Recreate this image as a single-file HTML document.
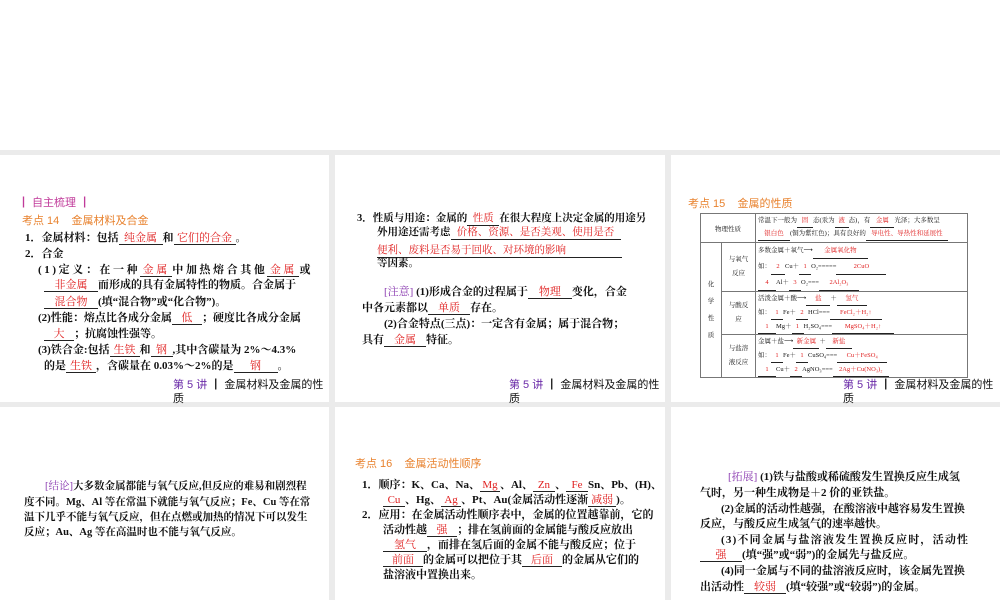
<!DOCTYPE html>
<html><head><meta charset="utf-8"><style>
body{margin:0;width:1000px;height:600px;background:#fff;position:relative;overflow:hidden;font-family:"Liberation Serif","Noto Serif CJK SC",serif;font-weight:bold;font-size:11px;color:#111}
.g{position:absolute;left:0;top:150px;width:1000px;height:450px;background:#ebebeb}
.p{position:absolute;background:#fff}
.l{position:absolute;white-space:nowrap;line-height:14px}
.b{display:inline-block;border-bottom:1px solid #222;color:#e02020;text-align:center;line-height:12px;font-weight:normal}
.h{color:#e8822e;font-family:"Liberation Sans","Noto Sans CJK SC",sans-serif;font-weight:normal;font-size:11px}
.m{color:#8a3ab0;font-weight:normal}
.f{font-family:"Liberation Sans","Noto Sans CJK SC",sans-serif;font-weight:normal;font-size:11px;color:#111}
.f i{font-style:normal;color:#6a2aa8}
table{position:absolute;border-collapse:collapse;table-layout:fixed;font-size:6.5px;font-weight:normal}
td{border:1px solid #777;padding:0 2px;vertical-align:middle;white-space:nowrap;overflow:hidden}
.r{color:#e02020;border-bottom:1px solid #222;display:inline-block;text-align:center}
</style></head><body>
<div class="g"></div>
<div class="p" style="left:0;top:155px;width:329px;height:247px"></div>
<div class="p" style="left:335px;top:155px;width:330px;height:247px"></div>
<div class="p" style="left:671px;top:155px;width:329px;height:247px"></div>
<div class="p" style="left:0;top:407px;width:329px;height:193px"></div>
<div class="p" style="left:335px;top:407px;width:330px;height:193px"></div>
<div class="p" style="left:671px;top:407px;width:329px;height:193px"></div>

<!-- panel 1 -->
<div class="l" style="left:18px;top:196px;color:#c03a9a;font-weight:normal;font-family:'Liberation Sans','Noto Sans CJK SC',sans-serif">┃ 自主梳理 ┃</div>
<div class="l h" style="left:22px;top:214px">考点 14 &nbsp;&nbsp; 金属材料及合金</div>
<div class="l" style="left:25px;top:231px">1．金属材料：包括<span class="b" style="width:44px">纯金属</span>和<span class="b" style="width:62px">它们的合金</span>。</div>
<div class="l" style="left:25px;top:247px">2．合金</div>
<div class="l" style="left:38px;top:263px;letter-spacing:2.6px">(1)定义：在一种<span class="b" style="width:32px">金属</span>中加热熔合其他<span class="b" style="width:32px">金属</span>或</div>
<div class="l" style="left:44px;top:278px"><span class="b" style="width:54px">非金属</span>而形成的具有金属特性的物质。合金属于</div>
<div class="l" style="left:44px;top:295px"><span class="b" style="width:54px">混合物</span>(填“混合物”或“化合物”)。</div>
<div class="l" style="left:38px;top:311px">(2)性能：熔点比各成分金属<span class="b" style="width:30px">低</span>；硬度比各成分金属</div>
<div class="l" style="left:44px;top:327px"><span class="b" style="width:30px">大</span>；抗腐蚀性强等。</div>
<div class="l" style="left:38px;top:343px">(3)铁合金:包括<span class="b" style="width:30px">生铁</span>和<span class="b" style="width:22px">钢</span>,其中含碳量为 2%～4.3%</div>
<div class="l" style="left:44px;top:359px">的是<span class="b" style="width:30px">生铁</span>，含碳量在 0.03%～2%的是<span class="b" style="width:44px">钢</span>。</div>
<div class="l f" style="left:173px;top:378px"><i>第 5 讲</i> ┃ 金属材料及金属的性</div>
<div class="l f" style="left:173px;top:392px">质</div>

<!-- panel 2 -->
<div class="l" style="left:357px;top:212px;font-size:10.5px">3．性质与用途：金属的<span class="b" style="width:32px">性质</span>在很大程度上决定金属的用途另</div>
<div class="l" style="left:377px;top:226px;font-size:10.5px">外用途还需考虑<span class="b" style="width:170px">价格、资源、是否美观、使用是否</span></div>
<div class="l" style="left:377px;top:244px;font-size:10.5px"><span class="b" style="width:245px;text-align:left">便利、废料是否易于回收、对环境的影响</span></div>
<div class="l" style="left:377px;top:257px;font-size:10.5px">等因素。</div>
<div class="l" style="left:384px;top:285px"><span class="m">[注意]</span> (1)形成合金的过程属于<span class="b" style="width:44px">物理</span>变化，合金</div>
<div class="l" style="left:362px;top:301px">中各元素都以<span class="b" style="width:42px">单质</span>存在。</div>
<div class="l" style="left:384px;top:317px">(2)合金特点(三点)：一定含有金属；属于混合物；</div>
<div class="l" style="left:362px;top:333px">具有<span class="b" style="width:42px">金属</span>特征。</div>
<div class="l f" style="left:509px;top:378px"><i>第 5 讲</i> ┃ 金属材料及金属的性</div>
<div class="l f" style="left:509px;top:392px">质</div>

<!-- panel 3 -->
<div class="l h" style="left:688px;top:197px">考点 15 &nbsp;&nbsp; 金属的性质</div>
<table style="left:700px;top:213px;width:267px;height:164px">
<colgroup><col style="width:21px"><col style="width:34px"><col style="width:212px"></colgroup>
<tr style="height:29px"><td colspan="2" style="text-align:center">物理性质</td><td style="line-height:12px">常温下一般为<span class="r" style="width:16px">固</span>态(汞为<span class="r" style="width:14px">液</span>态)，有<span class="r" style="width:24px">金属</span>光泽；大多数呈<br><span class="r" style="width:32px">银白色</span>(铜为紫红色)；具有良好的<span class="r" style="width:82px">导电性、导热性和延展性</span></td></tr>
<tr style="height:49px"><td rowspan="3" style="text-align:center;line-height:17px">化<br>学<br>性<br>质</td><td style="text-align:center;line-height:14px">与氧气<br>反应</td><td style="line-height:15px">多数金属＋氧气⟶<span class="r" style="width:55px">金属氧化物</span><br>如：<span class="r" style="width:14px">2</span>Cu＋<span class="r" style="width:12px">1</span>O₂=====<span class="r" style="width:50px">2CuO</span><br><span class="r" style="width:18px">4</span>Al＋<span class="r" style="width:12px">3</span>O₂===<span class="r" style="width:40px">2Al₂O₃</span></td></tr>
<tr style="height:42px"><td style="text-align:center;line-height:14px">与酸反<br>应</td><td style="line-height:13px">活泼金属＋酸⟶<span class="r" style="width:24px">盐</span>＋<span class="r" style="width:30px">氢气</span><br>如：<span class="r" style="width:12px">1</span>Fe＋<span class="r" style="width:12px">2</span>HCl===<span class="r" style="width:52px">FeCl₂＋H₂↑</span><br><span class="r" style="width:18px">1</span>Mg＋<span class="r" style="width:12px">1</span>H₂SO₄===<span class="r" style="width:62px">MgSO₄＋H₂↑</span></td></tr>
<tr style="height:43px"><td style="text-align:center;line-height:14px">与盐溶<br>液反应</td><td style="line-height:13px">金属＋盐⟶<span class="r" style="width:26px">新金属</span>＋<span class="r" style="width:26px">新盐</span><br>如：<span class="r" style="width:12px">1</span>Fe＋<span class="r" style="width:12px">1</span>CuSO₄===<span class="r" style="width:50px">Cu＋FeSO₄</span><br><span class="r" style="width:18px">1</span>Cu＋<span class="r" style="width:12px">2</span>AgNO₃===<span class="r" style="width:56px">2Ag＋Cu(NO₃)₂</span></td></tr>
</table>
<div class="l f" style="left:843px;top:378px"><i>第 5 讲</i> ┃ 金属材料及金属的性</div>
<div class="l f" style="left:843px;top:392px">质</div>

<!-- panel 4 -->
<div class="l" style="left:45px;top:480px;font-size:10.5px"><span class="m">[结论]</span>大多数金属都能与氧气反应,但反应的难易和剧烈程</div>
<div class="l" style="left:24px;top:496px;font-size:10.5px">度不同。Mg、Al 等在常温下就能与氧气反应；Fe、Cu 等在常</div>
<div class="l" style="left:24px;top:511px;font-size:10.5px">温下几乎不能与氧气反应，但在点燃或加热的情况下可以发生</div>
<div class="l" style="left:24px;top:526px;font-size:10.5px">反应；Au、Ag 等在高温时也不能与氧气反应。</div>

<!-- panel 5 -->
<div class="l h" style="left:355px;top:457px">考点 16 &nbsp;&nbsp; 金属活动性顺序</div>
<div class="l" style="left:362px;top:478px">1．顺序：K、Ca、Na、<span class="b" style="width:20px">Mg</span>、Al、<span class="b" style="width:22px">Zn</span>、<span class="b" style="width:22px">Fe</span>Sn、Pb、(H)、</div>
<div class="l" style="left:383px;top:493px"><span class="b" style="width:22px">Cu</span>、Hg、<span class="b" style="width:20px">Ag</span>、Pt、Au(金属活动性逐渐<span class="b" style="width:28px">减弱</span>)。</div>
<div class="l" style="left:362px;top:508px">2．应用：在金属活动性顺序表中，金属的位置越靠前，它的</div>
<div class="l" style="left:383px;top:523px">活动性越<span class="b" style="width:30px">强</span>；排在氢前面的金属能与酸反应放出</div>
<div class="l" style="left:383px;top:538px"><span class="b" style="width:44px">氢气</span>，而排在氢后面的金属不能与酸反应；位于</div>
<div class="l" style="left:383px;top:553px"><span class="b" style="width:40px">前面</span>的金属可以把位于其<span class="b" style="width:40px">后面</span>的金属从它们的</div>
<div class="l" style="left:383px;top:568px">盐溶液中置换出来。</div>

<!-- panel 6 -->
<div class="l" style="left:728px;top:470px"><span class="m">[拓展]</span> (1)铁与盐酸或稀硫酸发生置换反应生成氢</div>
<div class="l" style="left:700px;top:486px">气时，另一种生成物是＋2 价的亚铁盐。</div>
<div class="l" style="left:721px;top:502px">(2)金属的活动性越强，在酸溶液中越容易发生置换</div>
<div class="l" style="left:700px;top:517px">反应，与酸反应生成氢气的速率越快。</div>
<div class="l" style="left:721px;top:533px;letter-spacing:1.2px">(3)不同金属与盐溶液发生置换反应时，活动性</div>
<div class="l" style="left:700px;top:548px"><span class="b" style="width:42px">强</span>(填“强”或“弱”)的金属先与盐反应。</div>
<div class="l" style="left:721px;top:564px">(4)同一金属与不同的盐溶液反应时，该金属先置换</div>
<div class="l" style="left:700px;top:580px">出活动性<span class="b" style="width:42px">较弱</span>(填“较强”或“较弱”)的金属。</div>
</body></html>
